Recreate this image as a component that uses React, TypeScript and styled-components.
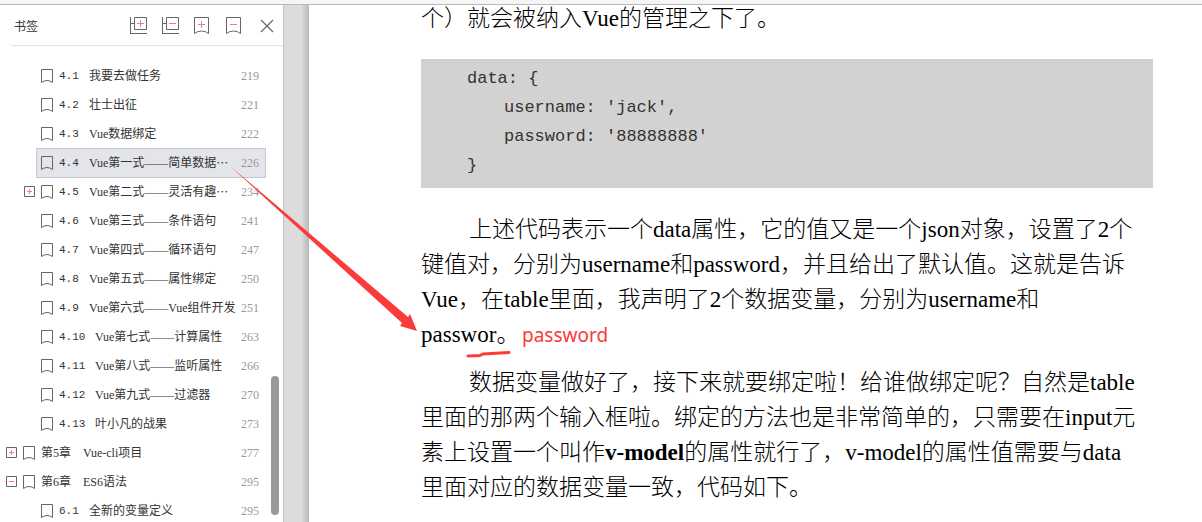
import React from "react";
import styled, { createGlobalStyle } from "styled-components";

const CJK = '"Noto Sans CJK SC"';

const GlobalStyle = createGlobalStyle`
  *, *::before, *::after { box-sizing: border-box; }
  body { margin: 0; background: #fff; }
  button { margin: 0; padding: 0; border: 0; background: none; cursor: pointer; display: flex; }
  svg { display: block; }
`;

const Shell = styled.div`
  position: relative;
  display: flex;
  flex-direction: column;
  height: 100vh;
  overflow: hidden;
  font-family: "Liberation Serif", ${CJK}, serif;
`;

const TopStrip = styled.header`
  flex: none;
  height: 5px;
  background: #f5f5f5;
  border-bottom: 1px solid #b9b9b9;
`;

const Workspace = styled.div`
  display: flex;
  flex: 1;
  min-height: 0;
`;

const Sidebar = styled.aside`
  display: flex;
  flex-direction: column;
  flex: none;
  width: 284px;
  background: #fff;
  border-right: 1px solid #c4c4c4;
`;

const SidebarHeader = styled.div`
  display: flex;
  align-items: center;
  flex: none;
  height: 41px;
  margin-left: 11px;
  padding: 2px 9px 0 3px;
  border-bottom: 1px solid #e4e4e4;
`;

const SidebarTitle = styled.h1`
  flex: 1;
  margin: 0;
  font: 400 12px/16px ${CJK}, sans-serif;
  color: #333;
`;

const Tools = styled.div`
  display: flex;
  align-items: center;
  gap: 14px;
`;

const CloseButton = styled.button`
  padding-left: 2px;
`;

const TreeArea = styled.div`
  display: flex;
  flex: 1;
  min-height: 0;
  overflow: hidden;
`;

const Tree = styled.ul`
  flex: 1;
  margin: 0;
  padding: 15px 0 0 0;
  list-style: none;
`;

const Row = styled.li<{ $level: number }>`
  display: flex;
  align-items: center;
  height: 29px;
  padding-left: ${(p) => (p.$level === 1 ? 6 : 24)}px;
`;

const ExpanderSlot = styled.span`
  flex: none;
  width: 12px;
`;

const Entry = styled.a<{ $selected?: boolean }>`
  display: flex;
  align-items: center;
  flex: 1;
  height: 30px;
  padding: 0 6px 0 4px;
  border: 1px solid ${(p) => (p.$selected ? "#c3c7d1" : "transparent")};
  background: ${(p) => (p.$selected ? "#e4e5ea" : "transparent")};
  color: #333;
  font-size: 12px;
  line-height: 16px;
  text-decoration: none;
  white-space: nowrap;
`;

const SectionNo = styled.span<{ $long: boolean }>`
  flex: none;
  width: ${(p) => (p.$long ? 36 : 30)}px;
  font-family: "Liberation Mono", monospace;
  font-size: 11px;
`;

const Label = styled.span`
  display: flex;
  flex: 1;
  min-width: 0;
`;

const Ellipsis = styled.span`
  font-family: ${CJK}, sans-serif;
`;

const PageNo = styled.span`
  flex: none;
  color: #999;
`;

const ScrollTrack = styled.div`
  display: flex;
  flex-direction: column;
  justify-content: flex-end;
  flex: none;
  width: 17px;
  padding: 0 4px 7px 5px;
`;

const ScrollThumb = styled.div`
  height: 139px;
  border-radius: 4px;
  background: #999;
`;

const Gutter = styled.div`
  flex: none;
  width: 25px;
  background: linear-gradient(to right, #dcdcdc 68%, #b8b8b8);
`;

const Page = styled.main`
  flex: 1;
  min-width: 0;
  padding: 0 49px 0 112px;
  color: #000;
  overflow: hidden;
`;

/* The document is scrolled slightly, so its first line starts above the viewport edge. */
const Article = styled.article`
  margin-top: -4px;
`;

const Paragraph = styled.p<{ $indent?: boolean }>`
  margin: 0 0 13px;
  font-size: 23px;
  line-height: 35px;
  font-weight: 300;
  text-indent: ${(p) => (p.$indent ? 48 : 0)}px;
  white-space: nowrap;
  b { font-weight: 700; }
`;

const CodeBlock = styled.pre`
  display: flex;
  flex-direction: column;
  margin: 23px 0 24px;
  padding: 5px 0 8px 46px;
  background: #d2d2d2;
  color: #333;
  font: 17px/29px "Liberation Mono", monospace;
`;

const CodeLine = styled.code<{ $nested?: boolean }>`
  padding-left: ${(p) => (p.$nested ? 37 : 0)}px;
  font: inherit;
`;

const Markup = styled.svg`
  position: absolute;
  left: 0;
  top: 0;
  pointer-events: none;
`;

const Note = styled.span`
  position: absolute;
  left: 522px;
  top: 322px;
  color: #fb3a3a;
  font: 19px/26px "Noto Sans", sans-serif;
`;

const LINE = "#666";
const RED = "#f47c7c";

const TreeToolIcon = ({ plus }: { plus?: boolean }) => (
  <svg width="18" height="18" viewBox="0 0 18 18" fill="none" stroke={LINE}>
    <path d="M.5 0v17M0 16.5h17M1 6.5h3M4.5.5h12v12h-12z" />
    <path d={plus ? "M7 6.5h7M10.5 3v7" : "M7 6.5h7"} stroke={RED} />
  </svg>
);

const MarkToolIcon = ({ plus }: { plus?: boolean }) => (
  <svg width="18" height="18" viewBox="0 0 18 18" fill="none" stroke={LINE}>
    <path d="M.5.5h14v16q-3-2.500-7-2.500t-7 2.500z" />
    <path d={plus ? "M4 7.5h7M7.5 4v7" : "M4 7.5h7"} stroke={RED} />
  </svg>
);

const CloseIcon = () => (
  <svg width="14" height="14" viewBox="0 0 14 14" fill="none" stroke={LINE} strokeWidth="1.2">
    <path d="M1 1l12 12M13 1L1 13" />
  </svg>
);

const BookmarkSvg = styled.svg`
  flex: none;
  margin-right: 6px;
`;

const BookmarkIcon = () => (
  <BookmarkSvg width="12" height="14" viewBox="0 0 12 14" fill="none" stroke={LINE}>
    <path d="M.5.5h11v13q-2.500-2-5.500-2t-5.500 2z" />
  </BookmarkSvg>
);

const ExpanderIcon = ({ open }: { open: boolean }) => (
  <svg width="11" height="11" viewBox="0 0 11 11" fill="none" stroke={LINE}>
    <path d="M.5.5h10v10h-10z" />
    <path d={open ? "M3 5.5h5" : "M3 5.5h5M5.5 3v5"} stroke={RED} />
  </svg>
);

type Item = {
  level: 1 | 2;
  no?: string;
  title: string;
  page: number;
  cut?: boolean;
  selected?: boolean;
  toggle?: "open" | "closed";
};

const items: Item[] = [
  { level: 2, no: "4.1", title: "我要去做任务", page: 219 },
  { level: 2, no: "4.2", title: "壮士出征", page: 221 },
  { level: 2, no: "4.3", title: "Vue数据绑定", page: 222 },
  { level: 2, no: "4.4", title: "Vue第一式——简单数据", page: 226, cut: true, selected: true },
  { level: 2, no: "4.5", title: "Vue第二式——灵活有趣", page: 234, cut: true, toggle: "closed" },
  { level: 2, no: "4.6", title: "Vue第三式——条件语句", page: 241 },
  { level: 2, no: "4.7", title: "Vue第四式——循环语句", page: 247 },
  { level: 2, no: "4.8", title: "Vue第五式——属性绑定", page: 250 },
  { level: 2, no: "4.9", title: "Vue第六式——Vue组件开发", page: 251 },
  { level: 2, no: "4.10", title: "Vue第七式——计算属性", page: 263 },
  { level: 2, no: "4.11", title: "Vue第八式——监听属性", page: 266 },
  { level: 2, no: "4.12", title: "Vue第九式——过滤器", page: 270 },
  { level: 2, no: "4.13", title: "叶小凡的战果", page: 273 },
  { level: 1, title: "第5章\u3000Vue-cli项目", page: 277, toggle: "closed" },
  { level: 1, title: "第6章\u3000ES6语法", page: 295, toggle: "open" },
  { level: 2, no: "6.1", title: "全新的变量定义", page: 295 },
];

export default function App() {
  return (
    <Shell>
      <GlobalStyle />
      <TopStrip />
      <Workspace>
        <Sidebar>
          <SidebarHeader>
            <SidebarTitle>书签</SidebarTitle>
            <Tools>
              <button aria-label="展开全部"><TreeToolIcon plus /></button>
              <button aria-label="折叠全部"><TreeToolIcon /></button>
              <button aria-label="添加书签"><MarkToolIcon plus /></button>
              <button aria-label="删除书签"><MarkToolIcon /></button>
              <CloseButton aria-label="关闭"><CloseIcon /></CloseButton>
            </Tools>
          </SidebarHeader>
          <TreeArea>
            <Tree>
              {items.map((it) => (
                <Row key={it.title} $level={it.level}>
                  <ExpanderSlot>
                    {it.toggle && (
                      <button aria-label={it.toggle === "open" ? "折叠" : "展开"}>
                        <ExpanderIcon open={it.toggle === "open"} />
                      </button>
                    )}
                  </ExpanderSlot>
                  <Entry href="#" $selected={it.selected}>
                    <BookmarkIcon />
                    {it.no && <SectionNo $long={it.no.length > 3}>{it.no}</SectionNo>}
                    <Label>
                      {it.title}
                      {it.cut && <Ellipsis>…</Ellipsis>}
                    </Label>
                    <PageNo>{it.page}</PageNo>
                  </Entry>
                </Row>
              ))}
            </Tree>
            <ScrollTrack>
              <ScrollThumb />
            </ScrollTrack>
          </TreeArea>
        </Sidebar>
        <Gutter />
        <Page>
          <Article>
            <Paragraph>个）就会被纳入Vue的管理之下了。</Paragraph>
            <CodeBlock>
              <CodeLine>{"data: {"}</CodeLine>
              <CodeLine $nested>{"username: 'jack',"}</CodeLine>
              <CodeLine $nested>{"password: '88888888'"}</CodeLine>
              <CodeLine>{"}"}</CodeLine>
            </CodeBlock>
            <Paragraph $indent>
              上述代码表示一个data属性，它的值又是一个json对象，设置了2个<br />
              键值对，分别为username和password，并且给出了默认值。这就是告诉<br />
              Vue，在table里面，我声明了2个数据变量，分别为username和<br />
              passwor。
            </Paragraph>
            <Paragraph $indent>
              数据变量做好了，接下来就要绑定啦！给谁做绑定呢？自然是table<br />
              里面的那两个输入框啦。绑定的方法也是非常简单的，只需要在input元<br />
              素上设置一个叫作<b>v-model</b>的属性就行了，v-model的属性值需要与data<br />
              里面对应的数据变量一致，代码如下。
            </Paragraph>
          </Article>
        </Page>
      </Workspace>
      <Markup width="620" height="370" viewBox="0 0 620 370">
        <path d="M230 166L408 317L410 314L417 331L400 326L402 323Z" fill="#fb3a3a" />
        <path d="M468 356L480 355.500L483 354L509 352.500" fill="none" stroke="#fb3a3a" strokeWidth="3" strokeLinecap="round" strokeLinejoin="round" />
      </Markup>
      <Note>password</Note>
    </Shell>
  );
}
